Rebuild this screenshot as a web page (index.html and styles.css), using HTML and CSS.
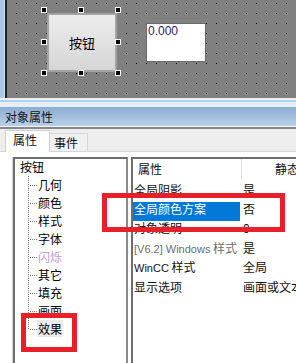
FILE: index.html
```html
<!DOCTYPE html>
<html lang="zh">
<head>
<meta charset="utf-8">
<title>对象属性</title>
<link rel="stylesheet" href="styles.css">
</head>
<body>
<div class="app">
  <div class="canvas">
    <div class="canvas-edge"></div>
    <div class="btn">按钮</div>
    <span class="handle h-l h-t"></span>
    <span class="handle h-m h-t"></span>
    <span class="handle h-r h-t"></span>
    <span class="handle h-l h-c"></span>
    <span class="handle h-r h-c"></span>
    <span class="handle h-l h-b"></span>
    <span class="handle h-m h-b"></span>
    <span class="handle h-r h-b"></span>
    <div class="field">0.000</div>
  </div>
  <div class="sep"></div>
  <div class="titlebar">对象属性</div>
  <div class="tabstrip">
    <div class="tab active">属性</div>
    <div class="tab">事件</div>
  </div>
  <div class="tabpage">
    <div class="tree">
      <ul class="root">
        <li class="root-item">按钮
          <ul class="children">
            <li>几何</li>
            <li>颜色</li>
            <li>样式</li>
            <li>字体</li>
            <li class="dim">闪烁</li>
            <li>其它</li>
            <li>填充</li>
            <li>画面</li>
            <li class="last"><span class="sel-item">效果</span></li>
          </ul>
        </li>
      </ul>
    </div>
    <div class="props">
      <div class="phead">
        <div class="hc1">属性</div>
        <div class="hc2">静态</div>
      </div>
      <div class="prow"><div class="c1">全局阴影</div><div class="c2">是</div></div>
      <div class="prow"><div class="c1 selected">全局颜色方案</div><div class="c2">否</div></div>
      <div class="prow"><div class="c1">对象透明</div><div class="c2">0</div></div>
      <div class="prow"><div class="c1 gray"><span class="lat">[V6.2] Windows</span> 样式</div><div class="c2">是</div></div>
      <div class="prow"><div class="c1"><span class="lat">WinCC</span> 样式</div><div class="c2">全局</div></div>
      <div class="prow"><div class="c1">显示选项</div><div class="c2">画面或文本</div></div>
    </div>
  </div>
  <div class="mark mark-tree"></div>
  <div class="mark mark-prop"></div>
</div>
</body>
</html>
```
FILE: styles.css
```css
* { box-sizing: border-box; }
html, body { margin: 0; padding: 0; }
body {
  font-family: "Noto Sans CJK SC", sans-serif;
  font-size: 12px;
  color: #111;
  background: #fff;
}
.app {
  position: relative;
  width: 296px;
  height: 363px;
  overflow: hidden;
  display: flex;
  flex-direction: column;
}

/* canvas */
.canvas {
  position: relative;
  height: 98px;
  flex: none;
  display: flex;
  background-color: #808080;
  background-image:
    linear-gradient(to right, transparent 0 1px, #808080 1px),
    linear-gradient(to bottom, #000 0 1px, #808080 1px);
  background-size: 10px 10px, 10px 10px;
  background-position: 6px 3px, 6px 3px;
}
.canvas-edge {
  width: 7px;
  flex: none;
  background: linear-gradient(to right, #a9c8e6 0 4px, #d6e4f2 4px 5px, #1e1e1e 5px 7px);
}
.btn {
  position: absolute;
  left: 47px;
  top: 13px;
  width: 70px;
  height: 59px;
  border: 2px solid #a3a3a3;
  background: linear-gradient(to bottom, #ececec, #d6d6d6);
  display: flex;
  align-items: center;
  justify-content: center;
  font-size: 13px;
  color: #000;
}
.handle {
  position: absolute;
  width: 6px;
  height: 6px;
  background: #000;
  border: 1px solid #fff;
}
.h-l { left: 41px; }
.h-m { left: 78px; }
.h-r { left: 115px; }
.h-t { top: 7px; }
.h-c { top: 39px; }
.h-b { top: 70px; }
.field {
  position: absolute;
  left: 146px;
  top: 23px;
  width: 60px;
  height: 39px;
  background: #fff;
  border: 1px solid #6a6a6a;
  padding: 1px 0 0 1px;
  font-family: "Liberation Sans", sans-serif;
  font-size: 12px;
  line-height: 12px;
  color: #33186e;
}

/* separator & title */
.sep {
  height: 9px;
  flex: none;
  background: linear-gradient(to bottom, #f0f0f0 0 2px, #a9d3f2 2px 4px, #e6eef8 4px 9px);
}
.titlebar {
  height: 20px;
  flex: none;
  background: linear-gradient(to bottom, #8cacd0, #b8d0ea);
  border-bottom: 1px solid #f6f6f6;
  padding-left: 5px;
  line-height: 19px;
  font-size: 12px;
  color: #151515;
}

/* tabs */
.tabstrip {
  height: 25px;
  flex: none;
  background: #eeeeee;
  border-top: 2px solid #858585;
  border-bottom: 1px solid #d6d6d6;
  padding-left: 5px;
  display: flex;
  align-items: flex-end;
}
.tab {
  height: 18px;
  width: 38px;
  padding-left: 4px;
  line-height: 18px;
  background: #f0f0f0;
  border-top: 1px solid #d6d6d6;
  border-right: 1px solid #d6d6d6;
}
.tab.active {
  position: relative;
  height: 22px;
  width: 45px;
  margin-bottom: -1px;
  padding-left: 7px;
  line-height: 18px;
  background: #fff;
  border: 1px solid #d0d0d0;
  border-bottom: none;
}

/* tab page */
.tabpage {
  flex: 1;
  display: flex;
  gap: 3px;
  padding: 5px 0 0 13px;
  background: #fff;
}
.tree {
  width: 115px;
  flex: none;
  border-top: 2px solid #6e6e6e;
  border-left: 2px solid #6e6e6e;
  border-right: 2px solid #8a8a8a;
  box-shadow: -1px 0 0 #d0d0d0;
}
.tree ul { list-style: none; margin: 0; padding: 0; }
.tree .root { margin-top: -1px; padding-left: 5px; }
.root-item { line-height: 18px; color: #000; }
.tree .children { margin-left: 8px; }
.children li {
  height: 18px;
  line-height: 18px;
  padding-left: 10px;
  color: #000;
  background-image:
    repeating-linear-gradient(to bottom, #7a7a7a 0 1px, transparent 1px 2px),
    repeating-linear-gradient(to right, #7a7a7a 0 1px, transparent 1px 2px);
  background-size: 1px 100%, 8px 1px;
  background-position: 0 0, 2px 9px;
  background-repeat: no-repeat;
}
.children li.last { background-size: 1px 10px, 8px 1px; }
.children li.dim { color: #c79ad2; }
.sel-item {
  display: inline-block;
  height: 17px;
  line-height: 17px;
  margin-left: -1px;
  padding: 0 1px;
  background: #ebebeb;
}

/* properties */
.props {
  width: 200px;
  flex: none;
  border-top: 2px solid #6e6e6e;
  border-left: 2px solid #6e6e6e;
}
.phead {
  height: 23.6px;
  display: flex;
  align-items: flex-start;
}
.hc1 {
  width: 109px;
  height: 20px;
  padding-left: 5px;
  line-height: 20px;
  border-right: 1px solid #dcdcdc;
}
.hc2 {
  padding-left: 33px;
  line-height: 20px;
  white-space: nowrap;
}
.prow {
  height: 19.4px;
  display: flex;
  line-height: 13px;
}
.c1 {
  width: 107px;
  padding-left: 1px;
  white-space: nowrap;
}
.c1.selected {
  background: #0078d7;
  color: #fff;
}
.c1.gray { color: #6d6d6d; }
.lat {
  font-family: "Liberation Sans", sans-serif;
  font-size: 11px;
}
.c2 {
  padding-left: 3px;
  white-space: nowrap;
}

/* red annotation frames */
.mark {
  position: absolute;
  border: 5px solid #e8202a;
}
.mark-tree { left: 21px; top: 313px; width: 56px; height: 39px; }
.mark-prop { left: 102px; top: 193px; width: 183px; height: 39px; }
```
